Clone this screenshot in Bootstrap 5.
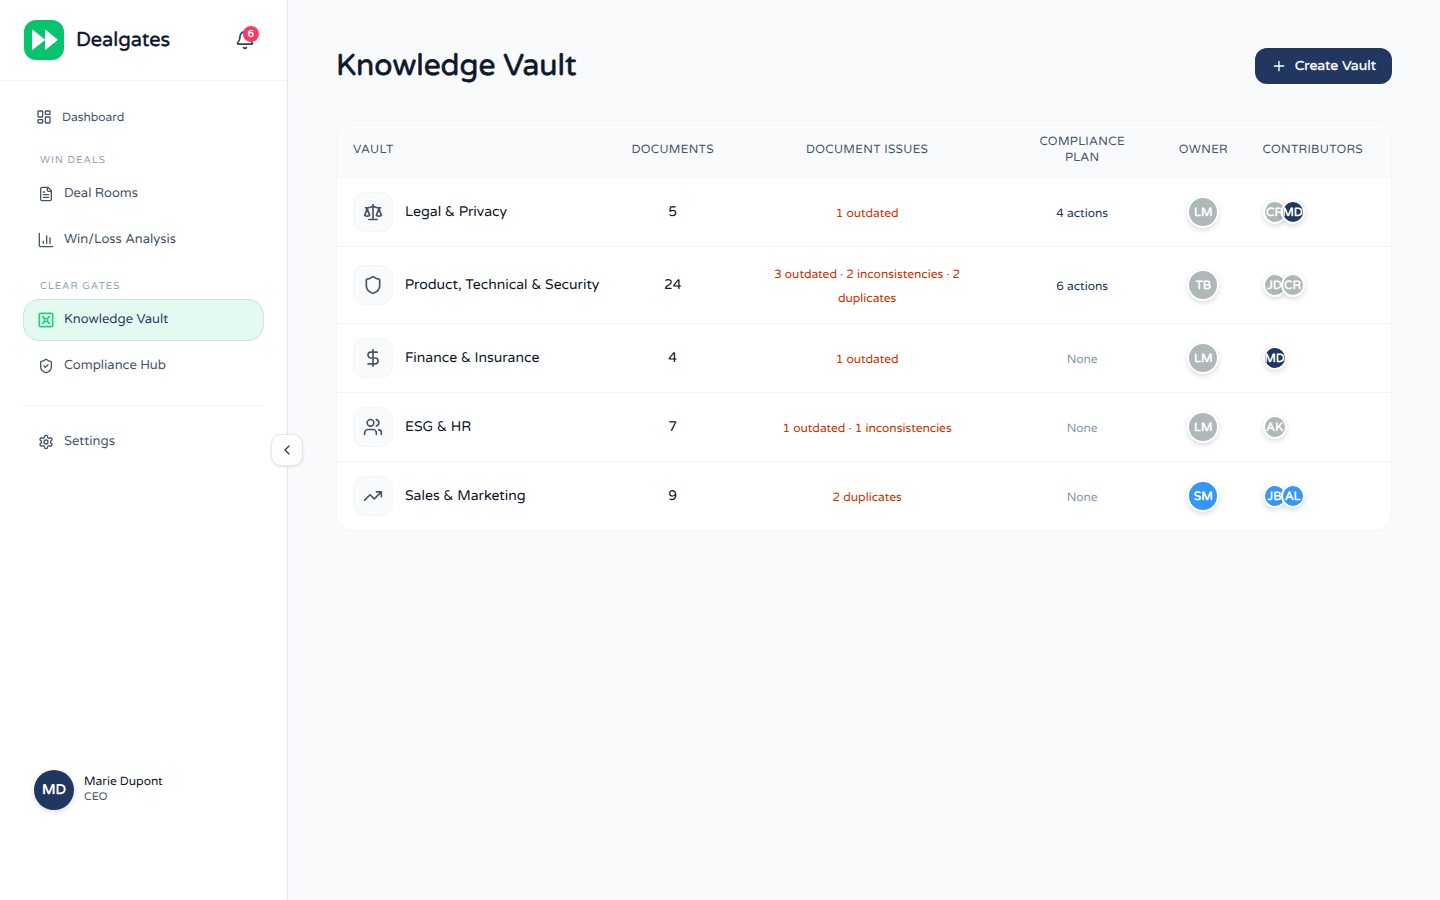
<!DOCTYPE html>
<html lang="en">
<head>
<meta charset="utf-8">
<meta name="viewport" content="width=device-width, initial-scale=1">
<title>Knowledge Vault - Dealgates</title>
<link rel="stylesheet" href="https://cdn.jsdelivr.net/npm/bootstrap@5.3.0/dist/css/bootstrap.min.css">
<style>
  :root { --ink: #0f172a; --slate: #475569; --line: #f1f5f9; --navy: #21375f; --green: #05c46b; }
  body { font-family: "Varela Round", "Noto Sans", sans-serif; background: #f8fafc; color: var(--ink); font-size: 14px; line-height: 24px; text-rendering: geometricPrecision; -webkit-font-smoothing: antialiased; }
  svg { display: block; fill: none; stroke: currentColor; stroke-width: 2; stroke-linecap: round; stroke-linejoin: round; flex: none; }
  a { color: inherit; text-decoration: none; }
  .side { width: 288px; border-right: 1px solid #e2e8f0; background: #fff; }
  .side-head { height: 81px; border-bottom: 1px solid var(--line); padding: 0 24px; }
  .side-head a, .vault-name { gap: 12px; }
  .logo { width: 40px; height: 40px; border-radius: 12px; background: var(--green); color: #fff; }
  .brand { font-size: 20px; line-height: 28px; }
  .brand, .page h1, .create { -webkit-text-stroke: 0.02em currentColor; }
  .bell { width: 36px; height: 36px; color: #334155; }
  .count { top: 4px; right: 4px; width: 16px; height: 16px; font-size: 10px; line-height: 16px; font-weight: 700; background: #ff3860; color: #fff; }
  .menu { padding: 16px 23px; color: var(--slate); }
  .menu-link { height: 42px; padding: 0 14px; gap: 10px; border: 1px solid transparent; border-radius: 16px; font-size: 13px; margin-bottom: 4px; }
  .menu-link span { padding-bottom: 2px; }
  .menu-link.dash { height: 40px; padding: 0 12px; font-size: 12px; margin: 0 0 2px; }
  .menu-link.dash span { padding: 2px 0 0; }
  .menu-link.on { background: #e4f9f0; border-color: #bdeed7; color: #334166; }
  .menu-link.on svg { color: #1fd17f; }
  .menu-label { font-size: 10px; line-height: 16px; letter-spacing: 1px; color: #94a3b8; margin: 13px 17px 5px; }
  .menu-rule { border-top: 1px solid var(--line); margin: 14px 0 15px; }
  .fold { top: 50%; right: -16px; width: 32px; height: 32px; margin-top: -16px; border: 1px solid #e2e8f0; border-radius: 10px; background: #fff; color: #334155; box-shadow: 0 1px 3px #0f172a1f; }
  .me { padding: 0 34px 90px; gap: 10px; }
  .disc { display: inline-flex; align-items: center; justify-content: center; flex: none; border-radius: 50%; color: #fff; font-weight: 700; background: #afb8b8; box-shadow: 0 2px 5px #0f172a26; overflow: hidden; white-space: nowrap; }
  .disc.navy { background: var(--navy); } .disc.blue { background: #3596fb; }
  .disc.big { width: 40px; height: 40px; font-size: 14px; padding-top: 2px; }
  .disc.mid { width: 32px; height: 32px; font-size: 12px; border: 2px solid #fff; padding-top: 2px; }
  .disc.tiny { width: 24px; height: 24px; font-size: 12px; border: 2px solid #fff; padding-top: 2px; }
  .disc.tiny + .disc.tiny { margin-left: -6px; }
  .me-name { font-size: 12px; line-height: 16px; } .me-role { font-size: 11px; line-height: 16px; color: var(--slate); }
  .page { padding: 48px; }
  .page h1 { font-size: 30px; line-height: 36px; font-weight: 400; margin: 0; }
  .create { height: 36px; padding: 0 16px; gap: 8px; border: 0; border-radius: 12px; background: var(--navy); color: #fff; font-size: 14px; font-weight: 400; }
  .create span { padding-bottom: 2px; }
  .panel { margin-top: 36px; border: 1px solid var(--line); border-radius: 16px; background: #fff; overflow: hidden; }
  .vaults { width: 100%; table-layout: fixed; text-align: center; }
  .vaults th { background: #f9fafc; color: var(--slate); font-size: 12px; line-height: 16px; font-weight: 400; letter-spacing: 0.025em; padding: 13px 16px 11px; vertical-align: middle; }
  .vaults td { padding: 14px 16px; border-top: 1px solid var(--line); font-size: 12px; }
  .vaults .start { text-align: left; }
  .vaults .name, .vaults .num { font-size: 14px; white-space: nowrap; }
  .vaults .num { padding-top: 15px; padding-bottom: 13px; }
  .vault-name > span:last-child { padding-top: 2px; }
  .vaults .warn, .vaults .acts, .vaults .none { padding-top: 16px; padding-bottom: 12px; }
  .tile { width: 40px; height: 40px; border: 1px solid var(--line); border-radius: 12px; background: #f8fafc; color: var(--slate); }
  .vaults .warn { color: #c93400; } .vaults .acts { color: var(--navy); } .vaults .none { color: #8a98ad; }
</style>
</head>
<body>
<div class="d-flex min-vh-100">
  <aside class="side position-relative d-flex flex-column flex-shrink-0">
    <div class="side-head d-flex align-items-center">
      <a href="#" class="d-flex align-items-center">
        <span class="logo d-flex align-items-center justify-content-center"><svg width="40" height="40" viewBox="0 0 40 40"><path d="M8.500 10.500v19L20.500 20zM21.500 10.500v19L33 20z" fill="currentColor" stroke-width="1"/></svg></span>
        <span class="brand">Dealgates</span>
      </a>
      <button type="button" class="bell btn p-0 border-0 position-relative ms-auto d-flex align-items-center justify-content-center" aria-label="Notifications">
        <svg width="20" height="20" viewBox="0 0 24 24"><path d="M10.268 21a2 2 0 0 0 3.464 0M3.262 15.326A1 1 0 0 0 4 17h16a1 1 0 0 0 .74-1.673C19.410 13.956 18 12.499 18 8A6 6 0 0 0 6 8c0 4.499-1.411 5.956-2.738 7.326"/></svg>
        <span class="count position-absolute rounded-circle">6</span>
      </button>
    </div>
    <nav class="menu d-flex flex-column">
      <a href="#" class="menu-link dash d-flex align-items-center"><svg width="16" height="16" viewBox="0 0 24 24"><rect x="3" y="3" width="7" height="9" rx="1"/><rect x="14" y="3" width="7" height="5" rx="1"/><rect x="14" y="12" width="7" height="9" rx="1"/><rect x="3" y="16" width="7" height="5" rx="1"/></svg><span>Dashboard</span></a>
      <div class="menu-label">WIN DEALS</div>
      <a href="#" class="menu-link d-flex align-items-center"><svg width="16" height="16" viewBox="0 0 24 24"><path d="M15 2H6a2 2 0 0 0-2 2v16a2 2 0 0 0 2 2h12a2 2 0 0 0 2-2V7zM14 2v4a2 2 0 0 0 2 2h4M10 9H8M16 13H8M16 17H8"/></svg><span>Deal Rooms</span></a>
      <a href="#" class="menu-link d-flex align-items-center"><svg width="16" height="16" viewBox="0 0 24 24"><path d="M2 2v18a2 2 0 0 0 2 2h18M8 17v-3M13 17V6M18 17V9"/></svg><span>Win/Loss Analysis</span></a>
      <div class="menu-label">CLEAR GATES</div>
      <a href="#" class="menu-link on d-flex align-items-center" aria-current="page"><svg width="16" height="16" viewBox="0 0 24 24"><rect x="2" y="2" width="20" height="20" rx="2" stroke-width="2.500"/><path d="m7 7 3 3M17 7l-3 3M7 17l3-3M17 17l-3-3" stroke-width="3"/><circle cx="12" cy="12" r="2.500"/></svg><span>Knowledge Vault</span></a>
      <a href="#" class="menu-link d-flex align-items-center"><svg width="16" height="16" viewBox="0 0 24 24"><path d="M20 13c0 5-3.500 7.500-7.660 8.950a1 1 0 0 1-.67-.01C7.500 20.500 4 18 4 13V6a1 1 0 0 1 1-1c2 0 4.500-1.200 6.240-2.720a1.170 1.170 0 0 1 1.520 0C14.510 3.810 17 5 19 5a1 1 0 0 1 1 1zM9 12l2 2 4-4"/></svg><span>Compliance Hub</span></a>
      <div class="menu-rule"></div>
      <a href="#" class="menu-link d-flex align-items-center"><svg width="16" height="16" viewBox="0 0 24 24"><path d="M12.220 2h-.44a2 2 0 0 0-2 2v.18a2 2 0 0 1-1 1.730l-.43.250a2 2 0 0 1-2 0l-.15-.08a2 2 0 0 0-2.730.730l-.22.380a2 2 0 0 0 .73 2.730l.15.100a2 2 0 0 1 1 1.720v.510a2 2 0 0 1-1 1.740l-.15.090a2 2 0 0 0-.73 2.730l.22.380a2 2 0 0 0 2.730.730l.15-.08a2 2 0 0 1 2 0l.43.250a2 2 0 0 1 1 1.730V20a2 2 0 0 0 2 2h.440a2 2 0 0 0 2-2v-.18a2 2 0 0 1 1-1.730l.43-.25a2 2 0 0 1 2 0l.15.080a2 2 0 0 0 2.730-.73l.22-.39a2 2 0 0 0-.73-2.730l-.15-.08a2 2 0 0 1-1-1.740v-.5a2 2 0 0 1 1-1.740l.15-.09a2 2 0 0 0 .73-2.730l-.22-.38a2 2 0 0 0-2.730-.73l-.15.080a2 2 0 0 1-2 0l-.43-.25a2 2 0 0 1-1-1.730V4a2 2 0 0 0-2-2z"/><circle cx="12" cy="12" r="3"/></svg><span>Settings</span></a>
    </nav>
    <div class="me d-flex align-items-center mt-auto">
      <span class="disc navy big">MD</span>
      <div><div class="me-name">Marie Dupont</div><div class="me-role">CEO</div></div>
    </div>
    <button type="button" class="fold btn p-0 position-absolute d-flex align-items-center justify-content-center" aria-label="Collapse sidebar"><svg width="16" height="16" viewBox="0 0 24 24"><path d="m15 18-6-6 6-6"/></svg></button>
  </aside>
  <main class="page flex-grow-1">
    <header class="d-flex align-items-center justify-content-between">
      <h1>Knowledge Vault</h1>
      <button type="button" class="create btn d-flex align-items-center"><svg width="16" height="16" viewBox="0 0 24 24"><path d="M5 12h14M12 5v14"/></svg><span>Create Vault</span></button>
    </header>
    <div class="panel">
      <table class="vaults">
        <colgroup><col style="width:26.400%"><col style="width:10.900%"><col style="width:26%"><col style="width:14.800%"><col style="width:8.200%"><col style="width:13.700%"></colgroup>
        <thead><tr><th class="start">VAULT</th><th>DOCUMENTS</th><th>DOCUMENT ISSUES</th><th>COMPLIANCE<br>PLAN</th><th>OWNER</th><th class="start">CONTRIBUTORS</th></tr></thead>
        <tbody>
          <tr>
            <td class="name"><div class="vault-name d-flex align-items-center"><span class="tile d-flex align-items-center justify-content-center"><svg width="20" height="20" viewBox="0 0 24 24"><path d="m16 16 3-8 3 8c-.87.650-1.920 1-3 1s-2.130-.35-3-1ZM2 16l3-8 3 8c-.87.650-1.920 1-3 1s-2.130-.35-3-1ZM7 21h10M12 3v18M3 7h2c2 0 5-1 7-2 2 1 5 2 7 2h2"/></svg></span><span>Legal &amp; Privacy</span></div></td>
            <td class="num">5</td><td class="warn">1 outdated</td><td class="acts">4 actions</td>
            <td><span class="disc mid align-middle">LM</span></td>
            <td><div class="d-flex"><span class="disc tiny">CR</span><span class="disc tiny navy">MD</span></div></td>
          </tr>
          <tr>
            <td class="name"><div class="vault-name d-flex align-items-center"><span class="tile d-flex align-items-center justify-content-center"><svg width="20" height="20" viewBox="0 0 24 24"><path d="M20 13c0 5-3.500 7.500-7.660 8.950a1 1 0 0 1-.67-.01C7.500 20.500 4 18 4 13V6a1 1 0 0 1 1-1c2 0 4.500-1.200 6.240-2.720a1.170 1.170 0 0 1 1.520 0C14.510 3.810 17 5 19 5a1 1 0 0 1 1 1z"/></svg></span><span>Product, Technical &amp; Security</span></div></td>
            <td class="num">24</td><td class="warn">3 outdated · 2 inconsistencies · 2 duplicates</td><td class="acts">6 actions</td>
            <td><span class="disc mid align-middle">TB</span></td>
            <td><div class="d-flex"><span class="disc tiny">JD</span><span class="disc tiny">CR</span></div></td>
          </tr>
          <tr>
            <td class="name"><div class="vault-name d-flex align-items-center"><span class="tile d-flex align-items-center justify-content-center"><svg width="20" height="20" viewBox="0 0 24 24"><path d="M12 2v20M17 5H9.500a3.500 3.500 0 0 0 0 7h5a3.500 3.500 0 0 1 0 7H6"/></svg></span><span>Finance &amp; Insurance</span></div></td>
            <td class="num">4</td><td class="warn">1 outdated</td><td class="none">None</td>
            <td><span class="disc mid align-middle">LM</span></td>
            <td><div class="d-flex"><span class="disc tiny navy">MD</span></div></td>
          </tr>
          <tr>
            <td class="name"><div class="vault-name d-flex align-items-center"><span class="tile d-flex align-items-center justify-content-center"><svg width="20" height="20" viewBox="0 0 24 24"><path d="M16 21v-2a4 4 0 0 0-4-4H6a4 4 0 0 0-4 4v2M22 21v-2a4 4 0 0 0-3-3.870M16 3.130a4 4 0 0 1 0 7.750"/><circle cx="9" cy="7" r="4"/></svg></span><span>ESG &amp; HR</span></div></td>
            <td class="num">7</td><td class="warn">1 outdated · 1 inconsistencies</td><td class="none">None</td>
            <td><span class="disc mid align-middle">LM</span></td>
            <td><div class="d-flex"><span class="disc tiny">AK</span></div></td>
          </tr>
          <tr>
            <td class="name"><div class="vault-name d-flex align-items-center"><span class="tile d-flex align-items-center justify-content-center"><svg width="20" height="20" viewBox="0 0 24 24"><path d="m22 7-8.500 8.500-5-5L2 17M16 7h6v6"/></svg></span><span>Sales &amp; Marketing</span></div></td>
            <td class="num">9</td><td class="warn">2 duplicates</td><td class="none">None</td>
            <td><span class="disc mid blue align-middle">SM</span></td>
            <td><div class="d-flex"><span class="disc tiny blue">JB</span><span class="disc tiny blue">AL</span></div></td>
          </tr>
        </tbody>
      </table>
    </div>
  </main>
</div>
<script src="https://cdn.jsdelivr.net/npm/bootstrap@5.3.0/dist/js/bootstrap.bundle.min.js"></script>
</body>
</html>
